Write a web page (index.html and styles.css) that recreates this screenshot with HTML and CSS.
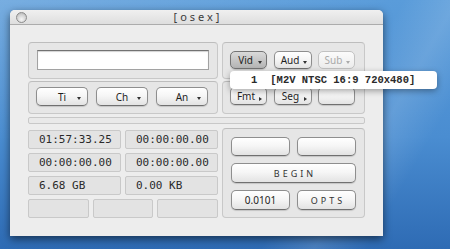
FILE: index.html
```html
<!DOCTYPE html>
<html>
<head>
<meta charset="utf-8">
<link rel="stylesheet" href="styles.css">
</head>
<body>
<div class="desktop">
  <div class="window">
    <div class="titlebar">
      <span class="close"></span>
      <span class="title">[osex]</span>
      <span></span>
    </div>
    <div class="content">
      <div class="top-grid">
        <div class="group g-field"><div class="textfield"></div></div>
        <div class="group g-row g-streams">
          <div class="btn pressed down w37">Vid</div>
          <div class="btn down w38 gap7">Aud</div>
          <div class="btn disabled down w37 gap6">Sub</div>
        </div>
        <div class="group g-row g-nav">
          <div class="btn down2 w52">Ti</div>
          <div class="btn down2 w52 gap8">Ch</div>
          <div class="btn down2 w52 gap8">An</div>
        </div>
        <div class="group g-row g-fmt">
          <div class="btn right w37">Fmt</div>
          <div class="btn right w38 gap7">Seg</div>
          <div class="btn w37 gap6"></div>
        </div>
      </div>
      <div class="separator"></div>
      <div class="bottom-grid">
        <div class="times">
          <div class="cell half">01:57:33.25</div>
          <div class="cell half">00:00:00.00</div>
          <div class="cell half">00:00:00.00</div>
          <div class="cell half">00:00:00.00</div>
          <div class="cell half">6.68 GB</div>
          <div class="cell half">0.00 KB</div>
          <div class="cell third"></div>
          <div class="cell third"></div>
          <div class="cell third"></div>
        </div>
        <div class="group actions">
          <div class="btn r1"></div>
          <div class="btn r1"></div>
          <div class="btn wide spaced">BEGIN</div>
          <div class="btn">0.0101</div>
          <div class="btn spaced">OPTS</div>
        </div>
      </div>
    </div>
  </div>
  <div class="menu"><span class="num">1</span><span>[M2V NTSC 16:9 720x480]</span></div>
</div>
</body>
</html>
```
FILE: styles.css
```css
html, body {
  margin: 0;
  padding: 0;
}
body {
  width: 450px;
  height: 249px;
  overflow: hidden;
  font-family: "Noto Sans", "DejaVu Sans", sans-serif;
}
.desktop {
  position: relative;
  width: 450px;
  height: 249px;
  box-sizing: border-box;
  padding: 10px 0 0 10px;
  background:
    linear-gradient(120deg, rgba(255,255,255,0) 68%, rgba(255,255,255,0.13) 77%, rgba(255,255,255,0) 86%),
    linear-gradient(160deg, rgba(255,255,255,0.18) 0%, rgba(255,255,255,0) 35%),
    linear-gradient(180deg, #5a9cda 0%, #4a8dd1 55%, #2e6bb4 100%);
}
.window {
  width: 373px;
  height: 226px;
  background: #ededed;
  border-radius: 5px 5px 0 0;
  box-shadow: 0 3px 9px rgba(0, 0, 0, 0.55);
  display: flex;
  flex-direction: column;
}
.titlebar {
  height: 14px;
  border-bottom: 1px solid #acacac;
  border-radius: 5px 5px 0 0;
  background: linear-gradient(#f0f0f0, #dedede);
  display: grid;
  grid-template-columns: 1fr auto 1fr;
  align-items: center;
}
.close {
  width: 9px;
  height: 9px;
  margin: 1px 0 0 6px;
  border-radius: 50%;
  border: 1px solid #8c8c8c;
  background: radial-gradient(circle at 50% 70%, #f6f6f6 0%, #d0d0d0 60%, #a8a8a8 100%);
}
.title {
  font-size: 11px;
  letter-spacing: 3px;
  margin-right: -3px;
  color: #3c3c3c;
  line-height: 14px;
}
.content {
  padding: 17px 18px 18px 18px;
  display: flex;
  flex-direction: column;
}
.top-grid {
  display: grid;
  grid-template-columns: 190px 143px;
  grid-template-rows: 37px 33px;
  column-gap: 4px;
  row-gap: 2px;
}
.group {
  box-sizing: border-box;
  background: #e6e6e6;
  border: 1px solid #c8c8c8;
  border-top-color: #bdbdbd;
  border-radius: 4px;
}
.g-field {
  padding: 7px 8px;
}
.textfield {
  width: 172px;
  height: 20px;
  box-sizing: border-box;
  background: #fff;
  border: 1px solid #a2a2a2;
  border-top-color: #727272;
  box-shadow: inset 0 1px 1px rgba(0,0,0,0.18);
}
.g-row {
  display: flex;
  align-items: flex-start;
}
.g-streams { padding: 8px 0 0 7px; }
.g-nav { padding: 5px 0 0 7px; }
.g-fmt { padding: 5px 0 0 7px; }
.g-streams .btn, .g-fmt .btn { height: 18px; }
.g-nav .btn { height: 19px; }
.w37 { width: 37px; }
.w38 { width: 38px; }
.w52 { width: 52px; }
.gap6 { margin-left: 6px; }
.gap7 { margin-left: 7px; }
.gap8 { margin-left: 8px; }

.btn {
  box-sizing: border-box;
  position: relative;
  border: 1px solid #8e8e8e;
  border-bottom-color: #707070;
  border-radius: 5px;
  background: linear-gradient(#ffffff 0%, #f6f6f6 45%, #e3e3e3 100%);
  box-shadow: 0 1px 1px rgba(0,0,0,0.15);
  display: flex;
  align-items: center;
  justify-content: center;
  font-size: 10px;
  color: #1e1e1e;
  line-height: 1;
}
.btn.pressed {
  background: linear-gradient(#dadada 0%, #c6c6c6 50%, #b4b4b4 100%);
  border-color: #747474;
}
.btn.disabled {
  color: #a9a9a9;
  border-color: #c2c2c2;
  background: linear-gradient(#fbfbfb, #ececec);
  box-shadow: none;
}
.btn.down { padding-right: 6px; }
.btn.down::after, .btn.down2::after {
  content: "";
  position: absolute;
  right: 4px;
  bottom: 4px;
  border-left: 2.5px solid transparent;
  border-right: 2.5px solid transparent;
  border-top: 3px solid #333;
}
.btn.down2::after { right: 6px; bottom: 5px; }
.btn.disabled::after { border-top-color: #aaa; }
.btn.right { padding-right: 5px; }
.btn.right::after {
  content: "";
  position: absolute;
  right: 4px;
  bottom: 3px;
  border-top: 2.5px solid transparent;
  border-bottom: 2.5px solid transparent;
  border-left: 3px solid #333;
}
.separator {
  margin-top: 3px;
  height: 7px;
  box-sizing: border-box;
  border: 1px solid #c8c8c8;
  border-radius: 2px;
  background: #e9e9e9;
}
.bottom-grid {
  margin-top: 4px;
  height: 90px;
  display: grid;
  grid-template-columns: 190px 143px;
  column-gap: 4px;
}
.times {
  padding-top: 2px;
  display: grid;
  grid-template-columns: repeat(6, 1fr);
  grid-template-rows: repeat(4, 19px);
  column-gap: 4px;
  row-gap: 4px;
}
.cell {
  box-sizing: border-box;
  background: #e3e3e3;
  border: 1px solid #c9c9c9;
  border-radius: 2px;
  font-family: "DejaVu Sans Mono", monospace;
  font-size: 11px;
  line-height: 17px;
  padding-left: 10px;
  color: #2a2a2a;
}
.half { grid-column: span 3; }
.third { grid-column: span 2; }
.actions {
  padding: 8px 8px 0 8px;
  display: grid;
  grid-template-columns: 59px 59px;
  grid-template-rows: 19px 20px 20px;
  column-gap: 7px;
  row-gap: 7px;
}
.wide { grid-column: span 2; }
.spaced {
  font-size: 9px;
  letter-spacing: 3px;
  padding-left: 3px;
  color: #333;
}
.menu {
  position: absolute;
  left: 230px;
  top: 71px;
  width: 207px;
  height: 18px;
  background: #fff;
  border-radius: 4px;
  box-shadow: 0 2px 6px rgba(0,0,0,0.35);
  display: flex;
  align-items: center;
  font-family: "Liberation Mono", monospace;
  font-weight: bold;
  font-size: 10.5px;
  color: #2a2a2a;
}
.menu .num {
  margin-left: 21px;
  margin-right: 13px;
}
```
